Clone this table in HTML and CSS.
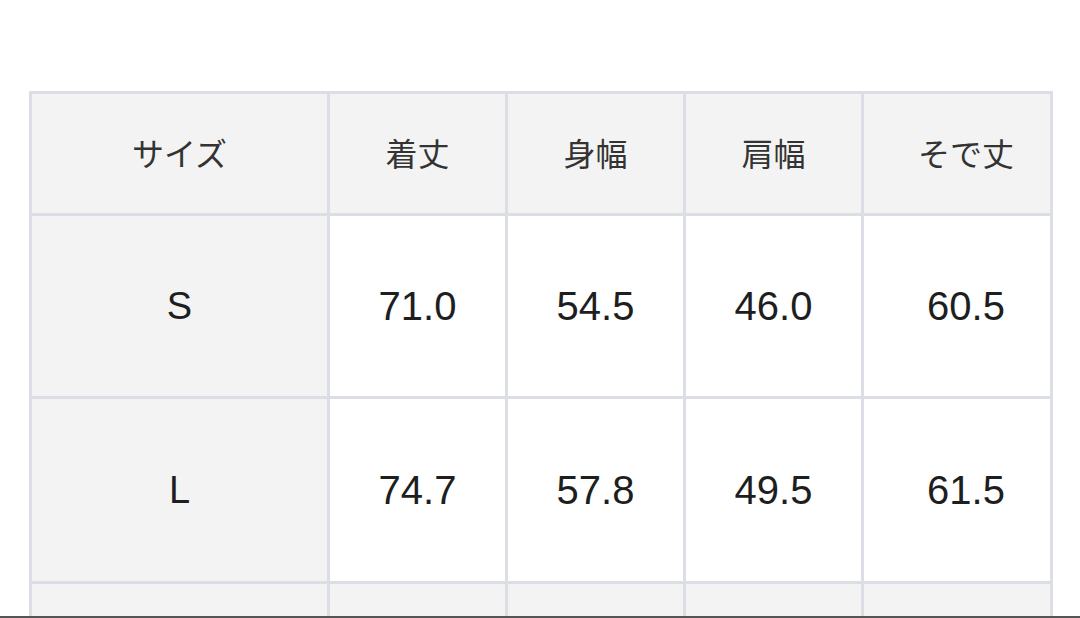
FILE: index.html
```html
<!DOCTYPE html>
<html lang="ja">
<head>
<meta charset="utf-8">
<link rel="stylesheet" href="styles.css">
</head>
<body>
<div class="page">
  <div class="size-table">
    <div class="cell head">サイズ</div>
    <div class="cell head">着丈</div>
    <div class="cell head">身幅</div>
    <div class="cell head">肩幅</div>
    <div class="cell head last">そで丈</div>

    <div class="cell label">S</div>
    <div class="cell num">71.0</div>
    <div class="cell num">54.5</div>
    <div class="cell num">46.0</div>
    <div class="cell num last">60.5</div>

    <div class="cell label">L</div>
    <div class="cell num">74.7</div>
    <div class="cell num">57.8</div>
    <div class="cell num">49.5</div>
    <div class="cell num last">61.5</div>

    <div class="cell label"></div>
    <div class="cell head"></div>
    <div class="cell head"></div>
    <div class="cell head"></div>
    <div class="cell head last"></div>
  </div>
</div>
</body>
</html>
```

FILE: styles.css
```css
html, body {
  margin: 0;
  padding: 0;
  background: #ffffff;
}

.page {
  box-sizing: border-box;
  height: 618px;
  overflow: hidden;
  padding: 91px 0 0 29px;
  border-bottom: 2px solid #555555;
}

.size-table {
  display: grid;
  width: 1024px;
  box-sizing: border-box;
  grid-template-columns: 295px 175px 175px 175px 186px;
  grid-template-rows: 119px 180px 182px 200px;
  gap: 3px;
  padding: 3px;
  background: #dcdee5;
}

.cell {
  display: flex;
  align-items: center;
  justify-content: center;
  background: #ffffff;
  color: #1e1e1e;
}

.cell.last {
  padding-left: 18px;
}

.head {
  background: #f3f3f3;
  color: #333333;
  font-family: "Noto Sans CJK JP", "Noto Sans", sans-serif;
  font-size: 32px;
  font-weight: 400;
  padding-bottom: 3px;
}

.label {
  background: #f3f3f3;
  font-family: "Liberation Sans", Arial, sans-serif;
  font-size: 38px;
}

.num {
  font-family: "Liberation Sans", Arial, sans-serif;
  font-size: 40px;
}
```
